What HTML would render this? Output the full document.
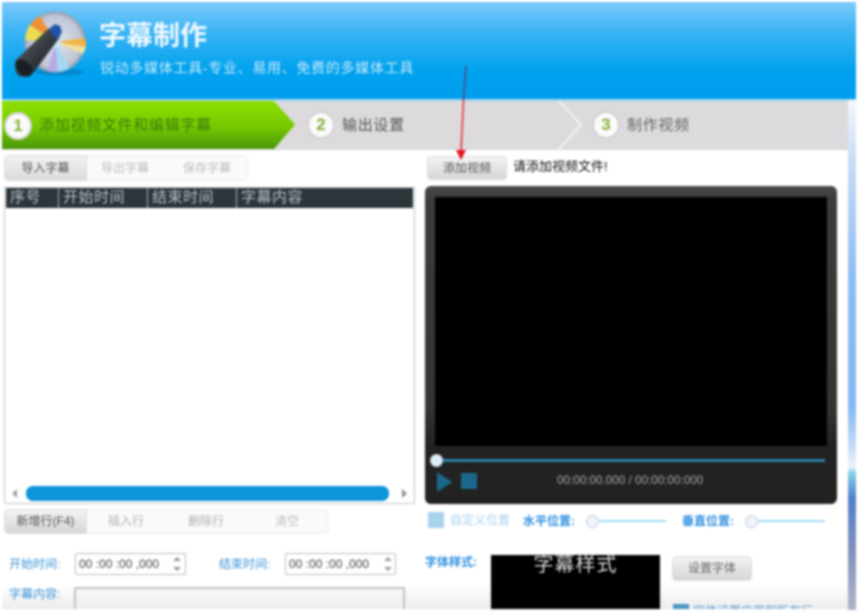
<!DOCTYPE html>
<html lang="zh"><head><meta charset="utf-8"><title>字幕制作</title>
<style>
html,body{margin:0;padding:0;background:#fff}
#p{position:relative;width:863px;height:612px;overflow:hidden;background:#fff;font-family:"Liberation Sans","Noto Sans CJK SC",sans-serif;font-size:12px;filter:blur(1px)}
#p div,#p span.a{position:absolute;box-sizing:border-box}
.t{position:absolute;white-space:nowrap;line-height:16px}
.blue{color:#3b93d8;font-size:12px}
.btn{border-radius:4px;background:linear-gradient(#f3f3f3,#d6d6d6);border:1px solid #dedede;color:#555;text-align:center}
.seg{color:#bcbcbc;text-align:center;line-height:24px}
.num{border-radius:50%;background:#fafafa;border:2px solid #d2d2d2;color:#7fb23a;font-weight:bold;text-align:center;font-size:17px;line-height:24px;width:28px;height:28px}
.in{background:#fff;border:1px solid #bcbcbc;border-radius:2px;color:#444;line-height:20px;padding-left:3px;font-size:12px;white-space:nowrap}
.hd{top:188px;height:20px;color:#b8c2c6;font-size:15px;letter-spacing:.5px;line-height:20px;border-right:1px solid #aab0b4;padding-left:4px;white-space:nowrap}
.knob{border-radius:50%;background:#f0f4f8;border:1px solid #c0d0dc}
.st{font-size:15px;letter-spacing:.7px}
</style></head><body>
<div id="p">
<div style="left:2px;top:2px;width:854px;height:98px;background:linear-gradient(#7ccafa 0%,#3cb4f4 30%,#00a2ee 70%,#009eee 100%)"></div>
<svg style="position:absolute;left:0;top:0;filter:blur(.6px)" width="100" height="90" viewBox="0 0 100 90">
<defs><radialGradient id="g" cx=".5" cy=".5" r=".5"><stop offset="0" stop-color="#dfe8f2"/><stop offset=".85" stop-color="#c0c6d4"/><stop offset="1" stop-color="#8f9cb0"/></radialGradient>
<linearGradient id="b" x1="0" y1="0" x2="1" y2="1"><stop offset="0" stop-color="#6a7078"/><stop offset=".45" stop-color="#3a4046"/><stop offset="1" stop-color="#0c1014"/></linearGradient></defs>
<ellipse cx="60" cy="72" rx="24" ry="3.500" fill="#0a6cac" opacity=".5"/>
<circle cx="55" cy="42" r="30.500" fill="url(#g)"/>
<path d="M55 42L40 16A30.500 30.500 0 0 0 30 25Z" fill="#ee9038"/>
<path d="M55 42L30 25A30.500 30.500 0 0 0 25 40Z" fill="#ecdc50"/>
<path d="M55 42L85 38A30.500 30.500 0 0 1 86 47Z" fill="#f2b440"/>
<path d="M55 42L86 47A30.500 30.500 0 0 1 83 54Z" fill="#f0e0a0"/>
<path d="M55 42L58 72A30.500 30.500 0 0 1 48 71Z" fill="#b8a8e8"/>
<path d="M55 42L58 72A30.500 30.500 0 0 0 70 68Z" fill="#a4d8f2"/>
<circle cx="55" cy="42" r="6" fill="#cfe6f4"/>
<path d="M16 60L49 28L60 37L34 72Q26 80 18 75Q13 68 16 60Z" fill="url(#b)"/>
<path d="M49 29L55 24L60 26L62 32L57 40Z" fill="#1f52ac"/>
<ellipse cx="24" cy="68" rx="6.500" ry="10" transform="rotate(-45 24 68)" fill="#1a1e22"/>
</svg>
<span class="t" style="left:99px;top:19px;font-size:27px;line-height:34px;color:#eef8ff;font-weight:bold">字幕制作</span>
<span class="t" style="left:100px;top:60px;font-size:14px;letter-spacing:.7px;color:#c8eafc">锐动多媒体工具-专业、易用、免费的多媒体工具</span>

<div style="left:2px;top:100px;width:846px;height:50px;background:#dcdadc"></div>
<svg style="position:absolute;left:0;top:100px" width="600" height="50"><defs><linearGradient id="gr" x1="0" y1="0" x2="0" y2="1"><stop offset="0" stop-color="#8ee000"/><stop offset=".55" stop-color="#76c800"/><stop offset="1" stop-color="#48960a"/></linearGradient></defs><path d="M2 1H274L295 24.500L274 49H2Z" fill="url(#gr)"/><path d="M558 0L581 25L558 50" fill="none" stroke="#f2f2f2" stroke-width="2"/></svg>
<div style="left:2px;top:99px;width:854px;height:2px;background:#9fd8f0"></div>
<div class="num" style="left:4px;top:112px;color:#85b53a">1</div>
<span class="t st" style="left:39px;top:118px;color:#3f7c0c">添加视频文件和编辑字幕</span>
<div class="num" style="left:307px;top:111px">2</div>
<span class="t st" style="left:342px;top:118px;color:#555">输出设置</span>
<div class="num" style="left:592px;top:111px">3</div>
<span class="t st" style="left:627px;top:118px;color:#666">制作视频</span>

<div style="left:848px;top:100px;width:8px;height:510px;background:linear-gradient(#f4f6fa 0%,#c8dcf6 12%,#8cbcf2 35%,#84b8f2 60%,#c4dcf6 68%,#eef2f8 72%,#84d4ea 73%,#5080cc 78%,#8090bc 88%,#b0b4c8 100%)"></div>

<div style="left:4px;top:155px;width:244px;height:26px;border:1px solid #ececec;border-radius:5px;background:#fafafa"></div>
<div class="btn" style="left:4px;top:155px;width:83px;height:26px;line-height:24px;border-radius:5px 0 0 5px;background:linear-gradient(#f2f2f2,#dcdcdc);color:#555">导入字幕</div>
<div class="seg t" style="left:84px;top:156px;width:82px;">导出字幕</div>
<div class="seg t" style="left:166px;top:156px;width:82px;">保存字幕</div>

<div style="left:4px;top:187px;width:411px;height:317px;border:1px solid #c4c4c4;background:#fff"></div>
<div style="left:6px;top:188px;width:407px;height:20px;background:#2c353a"></div>
<div class="hd" style="left:6px;width:53px">序号</div>
<div class="hd" style="left:59px;width:89px">开始时间</div>
<div class="hd" style="left:148px;width:89px">结束时间</div>
<div class="hd" style="left:237px;width:176px;border:0">字幕内容</div>
<div style="left:26px;top:486px;width:363px;height:15px;border-radius:7px;background:#0e94d8"></div>
<svg style="position:absolute;left:10px;top:487px" width="400" height="13"><path d="M7 2V11L2 6.500Z" fill="#a0a0a0"/><path d="M392 2V11L397 6.500Z" fill="#909090"/></svg>

<div style="left:4px;top:509px;width:325px;height:25px;border:1px solid #ececec;border-radius:5px;background:#fafafa"></div>
<div class="btn t" style="left:4px;top:509px;width:83px;height:25px;line-height:23px;border-radius:5px 0 0 5px;color:#555;font-size:12px">新增行(F4)</div>
<div class="seg t" style="left:86px;top:509px;width:80px;color:#b0b0b0">插入行</div>
<div class="seg t" style="left:166px;top:509px;width:80px;color:#b0b0b0">删除行</div>
<div class="seg t" style="left:246px;top:509px;width:82px;color:#c0c0c0">清空</div>

<span class="t blue" style="left:9px;top:556px">开始时间:</span>
<div class="in" style="left:75px;top:553px;width:111px;height:22px">00 :00 :00 ,000</div>
<svg style="position:absolute;left:170px;top:555px" width="14" height="18"><path d="M3 6L7 2L11 6Z M3 12H11L7 16Z" fill="#999"/></svg>
<span class="t blue" style="left:219px;top:556px">结束时间:</span>
<div class="in" style="left:285px;top:553px;width:111px;height:22px">00 :00 :00 ,000</div>
<svg style="position:absolute;left:381px;top:555px" width="14" height="18"><path d="M3 6L7 2L11 6Z M3 12H11L7 16Z" fill="#999"/></svg>
<div style="left:2px;top:585px;width:846px;height:24px;background:linear-gradient(#fff,#ececec)"></div>
<span class="t blue" style="left:9px;top:586px">字幕内容:</span>
<div style="left:74px;top:587px;width:331px;height:22px;border:2px solid #c0c0c0;border-bottom:0;background:linear-gradient(#f8f8f8,#eeeeee)"></div>

<div class="btn t" style="left:427px;top:156px;width:80px;height:24px;line-height:22px;color:#555">添加视频</div>
<span class="t" style="left:513px;top:159px;font-size:13px;color:#111">请添加视频文件!</span>

<div style="left:425px;top:186px;width:412px;height:318px;border-radius:6px;background:linear-gradient(#4a4a4a 0%,#3c3c3c 4%,#343434 70%,#222 82%,#222 100%)"></div>
<div style="left:435px;top:197px;width:392px;height:249px;background:#000"></div>
<div style="left:437px;top:459px;width:388px;height:3px;background:#2a80a8"></div>
<div class="knob" style="left:430px;top:454px;width:13px;height:13px;background:#dcecf8"></div>
<svg style="position:absolute;left:436px;top:471px" width="44" height="22"><path d="M1 1L16 11L1 21Z" fill="#1b688c"/><rect x="25" y="2" width="16" height="16" fill="#1b688c"/></svg>
<span class="t" style="left:557px;top:473px;font-size:11.700px;color:#a4a8a8">00:00:00.000 / 00:00:00:000</span>

<div style="left:428px;top:512px;width:16px;height:16px;background:#a8d4f0"></div>
<span class="t" style="left:450px;top:512px;font-size:12px;color:#a8d0ee">自定义位置</span>
<span class="t" style="left:523px;top:513px;color:#3090e0;font-size:12px;font-weight:bold">水平位置:</span>
<div style="left:592px;top:520px;width:74px;height:2px;background:#a4dcf4"></div>
<div class="knob" style="left:586px;top:515px;width:13px;height:13px"></div>
<span class="t" style="left:682px;top:513px;color:#3090e0;font-size:12px;font-weight:bold">垂直位置:</span>
<div style="left:751px;top:520px;width:74px;height:2px;background:#a4dcf4"></div>
<div class="knob" style="left:745px;top:515px;width:13px;height:13px"></div>

<span class="t" style="left:425px;top:554px;color:#3090e0;font-size:12px;font-weight:bold">字体样式:</span>
<div style="left:491px;top:555px;width:169px;height:54px;background:#000"></div>
<span class="t" style="left:491px;top:553px;width:169px;text-align:center;font-size:20px;line-height:24px;color:#d8d8d8;letter-spacing:1px">字幕样式</span>
<div class="btn t" style="left:672px;top:556px;width:80px;height:25px;line-height:23px;color:#666">设置字体</div>
<div style="left:673px;top:604px;width:16px;height:5px;background:#4a94c4"></div>
<div style="left:692px;top:603px;width:130px;height:6px;overflow:hidden"><span class="t" style="left:1px;top:0;font-size:12px;color:#5a9ad0">字体设置应用到所有行</span></div>
<svg style="position:absolute;left:440px;top:60px" width="50" height="105"><path d="M26 6L23.500 40" stroke="#3c5c9c" stroke-width="2" fill="none"/><path d="M23.500 40L21 92" stroke="#e4464c" stroke-width="1.800" fill="none"/><path d="M16 90H26L21 100Z" fill="#e8141c"/></svg>
</div>
</body></html>
